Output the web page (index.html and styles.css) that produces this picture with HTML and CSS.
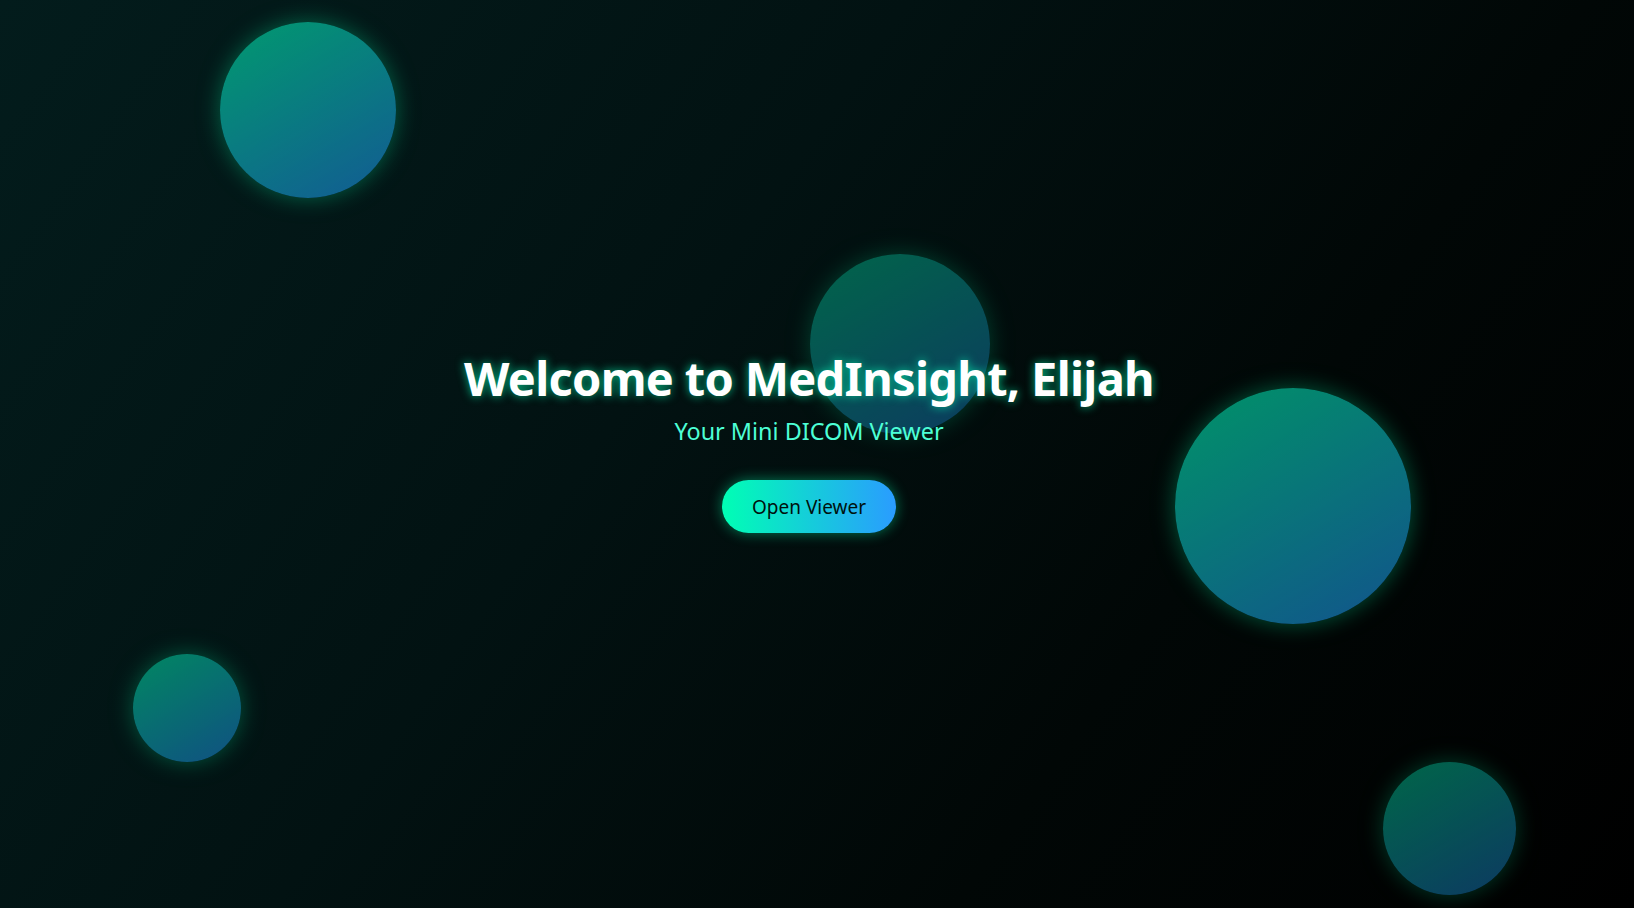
FILE: index.html
```html
<!DOCTYPE html>
<html lang="en">
<head>
<meta charset="utf-8">
<title>MedInsight</title>
<link rel="stylesheet" href="styles.css">
</head>
<body>
<div class="page">
  <div class="bubble b1"></div>
  <div class="bubble b2"></div>
  <div class="bubble b3"></div>
  <div class="bubble b4"></div>
  <div class="bubble b5"></div>
  <main class="hero">
    <h1 class="title">Welcome to MedInsight, Elijah</h1>
    <p class="subtitle">Your Mini DICOM Viewer</p>
    <button class="cta">Open Viewer</button>
  </main>
</div>
</body>
</html>
```
FILE: styles.css
```css
html, body {
  margin: 0;
  padding: 0;
  height: 100%;
}
body {
  font-family: "Noto Sans", "Open Sans", sans-serif;
  background: #000;
  overflow: hidden;
}
.page {
  position: relative;
  width: 100%;
  height: 100vh;
  background: linear-gradient(125deg, #031c1c 0%, #021212 40%, #010706 70%, #000000 100%);
  display: flex;
  align-items: center;
  justify-content: center;
  overflow: hidden;
}
.bubble {
  position: absolute;
  border-radius: 50%;
  background: linear-gradient(150deg, #00f0a8 0%, #1e88e8 100%);
  box-shadow: 0 0 22px rgba(0, 255, 170, 0.55);
  opacity: 0.6;
}
.b1 { left: 220px; top: 22px; width: 176px; height: 176px; }
.b2 { left: 810px; top: 254px; width: 180px; height: 180px; opacity: 0.38; }
.b3 { left: 1175px; top: 388px; width: 236px; height: 236px; }
.b4 { left: 133px; top: 654px; width: 108px; height: 108px; opacity: 0.52; }
.b5 { left: 1383px; top: 762px; width: 133px; height: 133px; opacity: 0.42; }
.hero {
  position: relative;
  z-index: 1;
  display: flex;
  flex-direction: column;
  align-items: center;
  margin-top: -27px;
  margin-right: 16px;
}
.title {
  margin: 0;
  font-size: 47px;
  line-height: 60px;
  letter-spacing: -0.7px;
  font-weight: 700;
  color: #ffffff;
  text-shadow: 0 0 10px rgba(0, 255, 180, 0.7);
}
.subtitle {
  margin: 5px 0 0;
  font-size: 23.4px;
  line-height: 36px;
  color: #4dffd6;
}
.cta {
  margin-top: 31px;
  width: 174px;
  height: 53px;
  border: none;
  border-radius: 27px;
  background: linear-gradient(90deg, #00ffb4 0%, #2a9cff 100%);
  box-shadow: 0 0 14px rgba(0, 255, 170, 0.45);
  color: #00120e;
  font-family: "Noto Sans", sans-serif;
  font-size: 19px;
  cursor: pointer;
}
```
